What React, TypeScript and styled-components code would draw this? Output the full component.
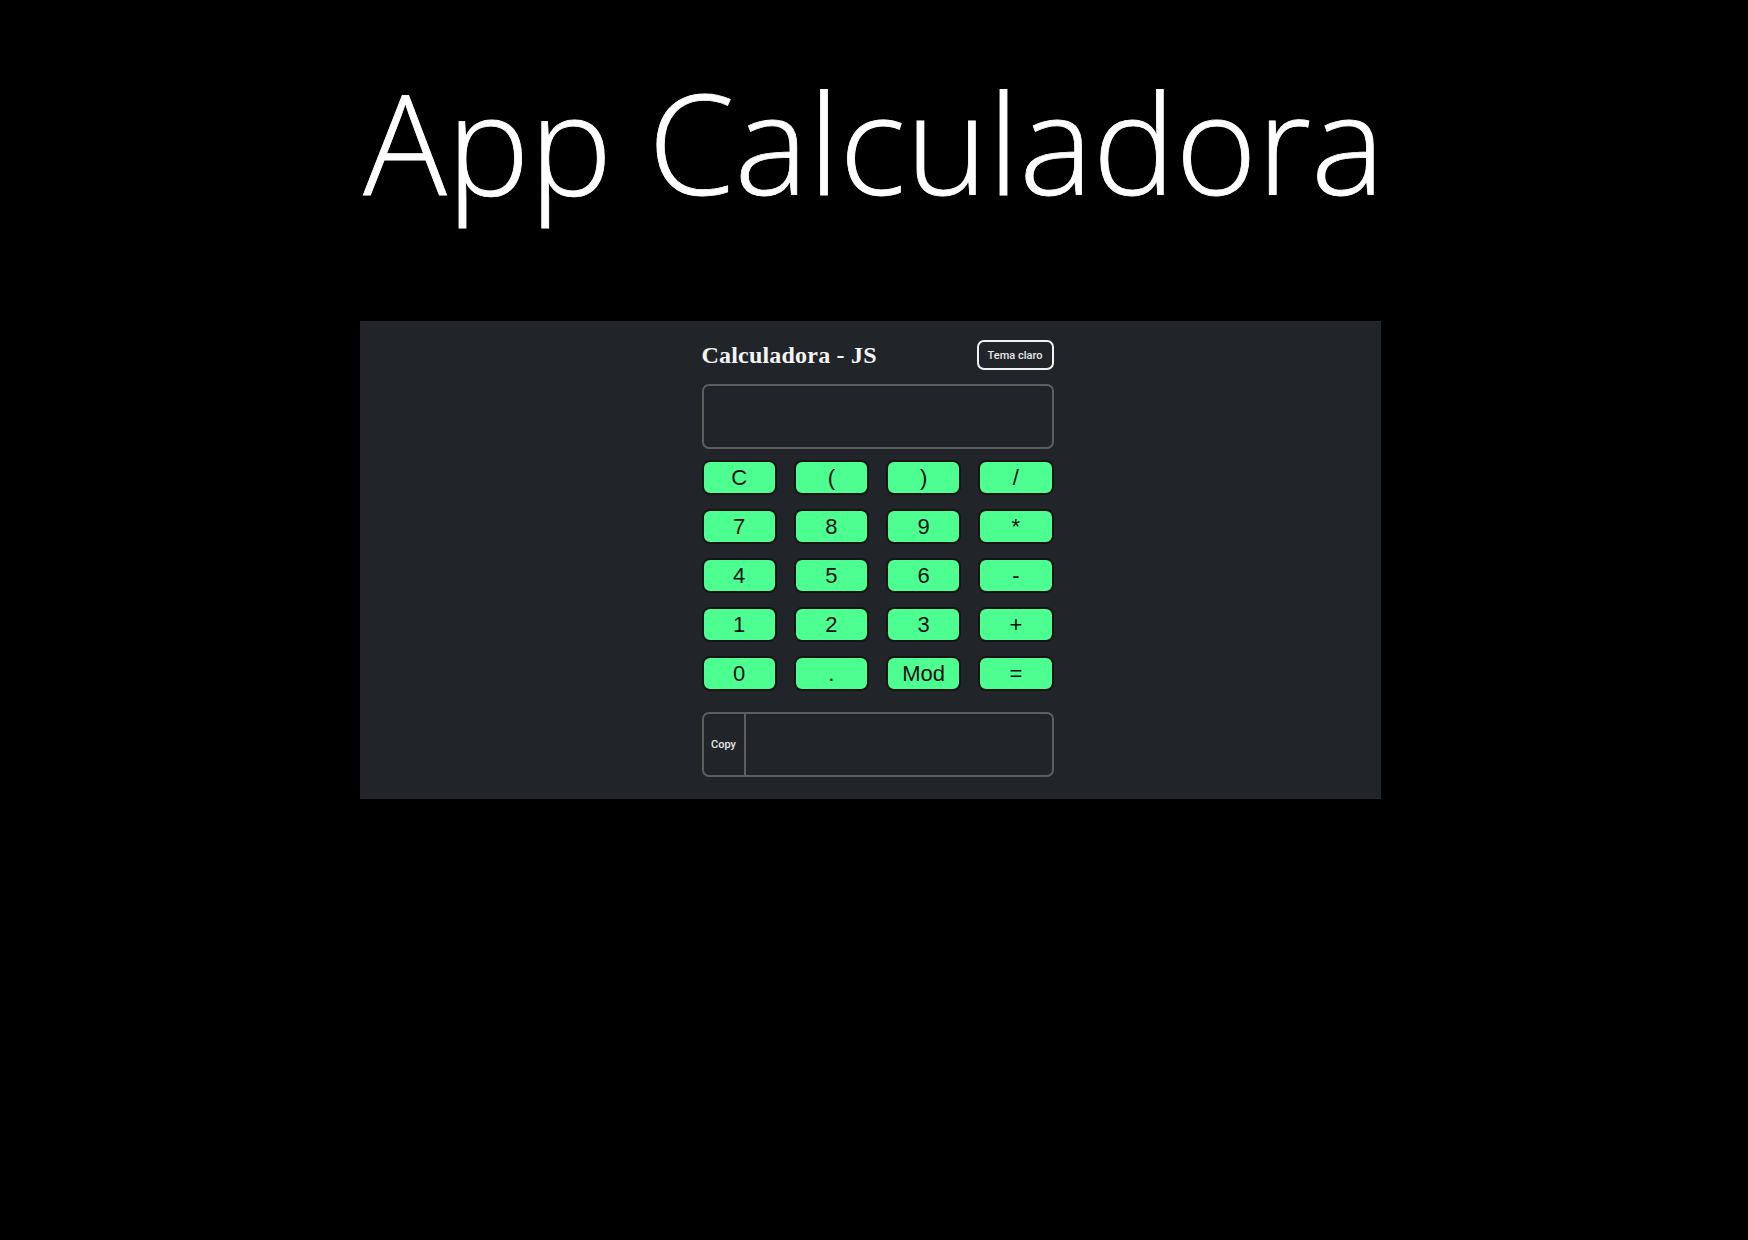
import React from "react";
import styled, { createGlobalStyle } from "styled-components";

const GlobalStyle = createGlobalStyle`
  html, body {
    margin: 0;
    padding: 0;
    background: #000;
  }
  body {
    font-family: "Liberation Sans", Arial, sans-serif;
  }
`;

const Page = styled.div`
  width: 1748px;
  min-height: 1240px;
  background: #000;
  display: flex;
  flex-direction: column;
  align-items: center;
`;

const Title = styled.h1`
  margin: 72px 0 110px 0;
  font-family: "Open Sans", "Noto Sans", sans-serif;
  font-weight: 300;
  font-size: 139px;
  line-height: 139px;
  color: #fff;
  -webkit-text-stroke: 0.8px #fff;
`;

const Panel = styled.section`
  margin-left: -8px;
  width: 1021px;
  box-sizing: border-box;
  background: #212529;
  padding: 19px 327px 22px 342px;
`;

const Calc = styled.div`
  width: 352px;
  display: flex;
  flex-direction: column;
`;

const Header = styled.div`
  display: flex;
  justify-content: space-between;
  align-items: center;
  height: 30px;
`;

const CalcName = styled.h2`
  margin: 0;
  font-family: "Liberation Serif", "Times New Roman", serif;
  font-weight: 700;
  font-size: 24px;
  letter-spacing: 0.2px;
  color: #f4f4f4;
`;

const ThemeButton = styled.button`
  width: 77px;
  height: 30px;
  box-sizing: border-box;
  border: 2px solid #f2f2f2;
  border-radius: 7px;
  background: transparent;
  color: #e8e8e8;
  font-family: Roboto, "Liberation Sans", sans-serif;
  font-size: 11px;
  font-weight: 500;
  padding: 0;
`;

const Display = styled.div`
  margin-top: 14px;
  height: 65px;
  box-sizing: border-box;
  border: 2px solid #5e5e5e;
  border-radius: 7px;
`;

const Keys = styled.div`
  margin-top: 11px;
  display: grid;
  grid-template-columns: repeat(4, 1fr);
  grid-auto-rows: 35px;
  column-gap: 17px;
  row-gap: 14px;
`;

const Key = styled.button`
  box-sizing: border-box;
  border: 2px solid #141414;
  border-radius: 8px;
  background: #4dff91;
  color: #111;
  font-family: "Liberation Sans", Arial, sans-serif;
  font-size: 22px;
  padding: 0;
  line-height: 1;
`;

const Output = styled.div`
  margin-top: 21px;
  height: 65px;
  box-sizing: border-box;
  border: 2px solid #5e5e5e;
  border-radius: 7px;
  display: flex;
`;

const CopyButton = styled.button`
  width: 42px;
  border: none;
  border-right: 2px solid #5e5e5e;
  background: transparent;
  color: #e8e8e8;
  font-family: Roboto, "Liberation Sans", sans-serif;
  font-size: 11px;
  font-weight: 500;
  padding: 0;
`;

const keys = ["C", "(", ")", "/", "7", "8", "9", "*", "4", "5", "6", "-", "1", "2", "3", "+", "0", ".", "Mod", "="];

export default function App() {
  return (
    <>
      <GlobalStyle />
      <Page>
        <Title>App Calculadora</Title>
        <Panel>
          <Calc>
            <Header>
              <CalcName>Calculadora - JS</CalcName>
              <ThemeButton>Tema claro</ThemeButton>
            </Header>
            <Display />
            <Keys>
              {keys.map((k) => (
                <Key key={k}>{k}</Key>
              ))}
            </Keys>
            <Output>
              <CopyButton>Copy</CopyButton>
            </Output>
          </Calc>
        </Panel>
      </Page>
    </>
  );
}
